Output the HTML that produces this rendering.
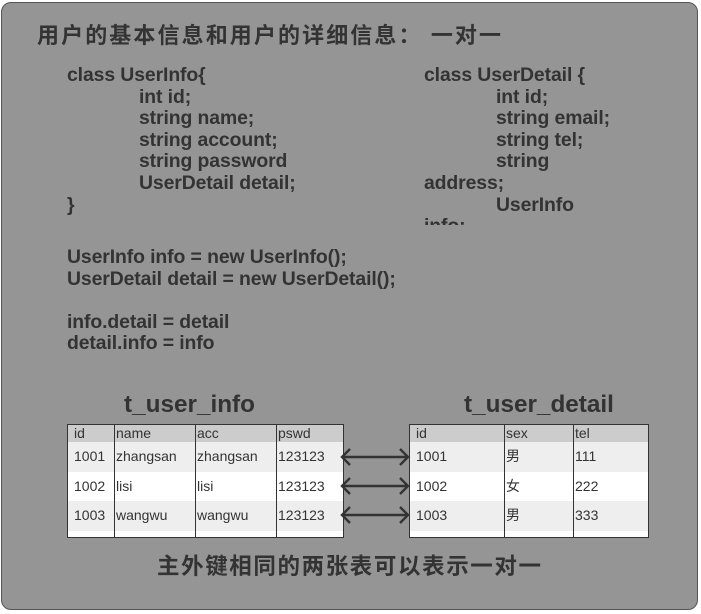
<!DOCTYPE html>
<html><head><meta charset="utf-8"><style>
body{margin:0;width:701px;height:614px;background:#fff;position:relative;overflow:hidden;font-family:"Liberation Sans","Noto Sans CJK SC",sans-serif;color:#333}
.box{position:absolute;left:1px;top:2px;width:695px;height:606px;border:1px solid #555;border-radius:10px;background:#959595}
.t{position:absolute;font-weight:bold;white-space:nowrap}
.c{font-size:19.4px;line-height:21.6px;letter-spacing:-0.1px}
table{position:absolute;border-collapse:collapse;font-size:14px;color:#333}
td{border-left:1px solid #333;padding:0 0 0 1px;height:29.5px;line-height:29.5px}
td:first-child{padding-left:6px}
tr.h td{height:17px;line-height:17px;background:#ccc}
tr.a td{background:#eee}tr.b td{background:#fff}tr.e td{height:6px;background:#fff}
</style></head><body>
<div class="box"></div>
<div class="t" style="left:37px;top:18px;font-size:22px;letter-spacing:2.1px">用户的基本信息和用户的详细信息： 一对一</div>
<div class="t c" style="left:67px;top:65px">class UserInfo{<br><span style="padding-left:72px">int id;</span><br><span style="padding-left:72px">string name;</span><br><span style="padding-left:72px">string account;</span><br><span style="padding-left:72px">string password</span><br><span style="padding-left:72px">UserDetail detail;</span><br>}</div>
<div class="t c" style="left:424px;top:65px;height:160px;overflow:hidden">class UserDetail {<br><span style="padding-left:72px">int id;</span><br><span style="padding-left:72px">string email;</span><br><span style="padding-left:72px">string tel;</span><br><span style="padding-left:72px">string</span><br>address;<br><span style="padding-left:72px">UserInfo</span><br>info;</div>
<div class="t c" style="left:67px;top:247px">UserInfo info = new UserInfo();<br>UserDetail detail = new UserDetail();<br><br>info.detail = detail<br>detail.info = info</div>
<div class="t" style="left:124px;top:391px;font-size:24.3px">t_user_info</div>
<div class="t" style="left:464px;top:391px;font-size:24.3px">t_user_detail</div>
<table style="left:67px;top:424px;width:277px;border:1px solid #333">
<colgroup><col style="width:47px"><col style="width:81px"><col style="width:81px"><col></colgroup>
<tr class="h"><td style="border-left:0">id</td><td>name</td><td>acc</td><td>pswd</td></tr>
<tr class="a"><td style="border-left:0">1001</td><td>zhangsan</td><td>zhangsan</td><td>123123</td></tr>
<tr class="b"><td style="border-left:0">1002</td><td>lisi</td><td>lisi</td><td>123123</td></tr>
<tr class="a"><td style="border-left:0">1003</td><td>wangwu</td><td>wangwu</td><td>123123</td></tr>
<tr class="e"><td style="border-left:0"></td><td></td><td></td><td></td></tr>
</table>
<table style="left:409px;top:424px;width:240px;border:1px solid #333">
<colgroup><col style="width:95px"><col style="width:69px"><col></colgroup>
<tr class="h"><td style="border-left:0">id</td><td>sex</td><td>tel</td></tr>
<tr class="a"><td style="border-left:0">1001</td><td>男</td><td>111</td></tr>
<tr class="b"><td style="border-left:0">1002</td><td>女</td><td>222</td></tr>
<tr class="a"><td style="border-left:0">1003</td><td>男</td><td>333</td></tr>
<tr class="e"><td style="border-left:0"></td><td></td><td></td></tr>
</table>
<svg style="position:absolute;left:338px;top:440px" width="76" height="90" fill="none" stroke="#333" stroke-width="2.4">
<path d="M4 17H70M12 9L4 17L12 25M62 9L70 17L62 25"/>
<path d="M4 46H70M12 38L4 46L12 54M62 38L70 46L62 54"/>
<path d="M4 75H70M12 67L4 75L12 83M62 67L70 75L62 83"/>
</svg>
<div class="t" style="left:157px;top:549px;font-size:22.5px;letter-spacing:1.6px">主外键相同的两张表可以表示一对一</div>
</body></html>
